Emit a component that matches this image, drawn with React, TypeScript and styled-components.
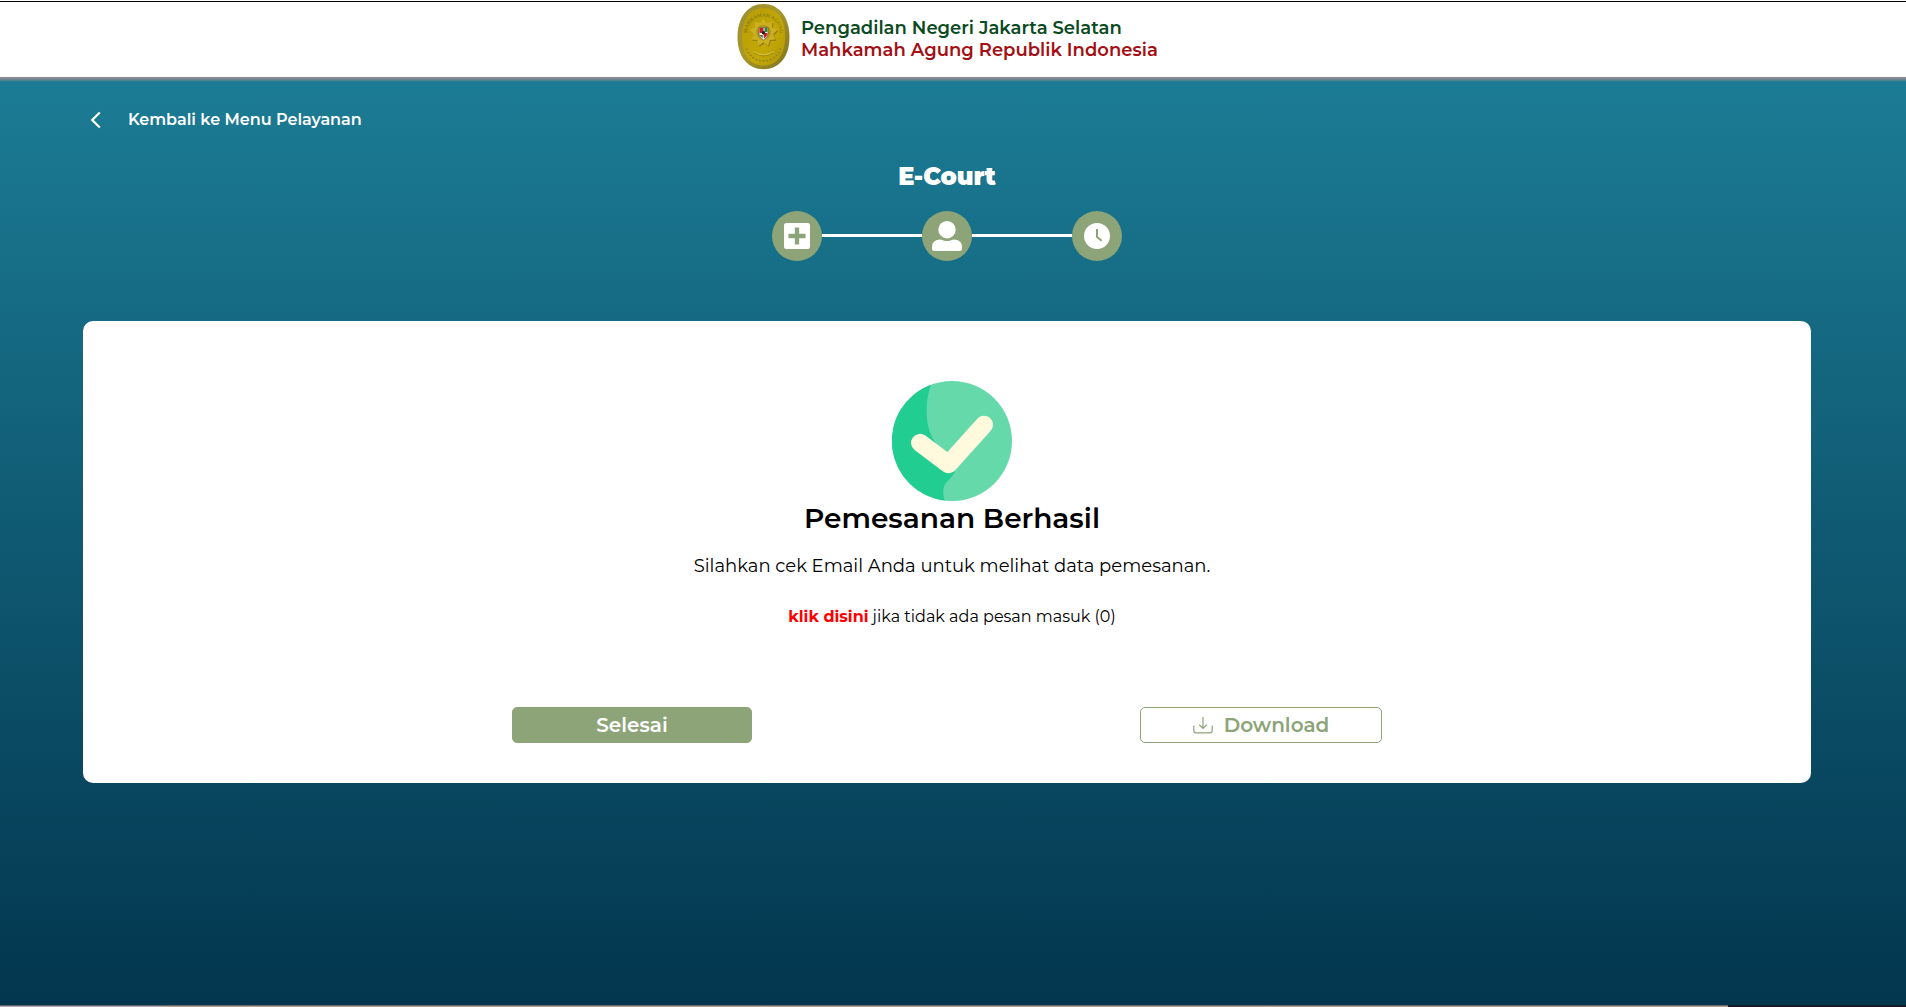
import React from "react";
import styled, { createGlobalStyle } from "styled-components";

const GlobalStyle = createGlobalStyle`
  *, *::before, *::after { box-sizing: border-box; }
  body { margin: 0; font-family: Montserrat, Inter, "Liberation Sans", sans-serif; }
`;

const Page = styled.div`
  display: flex;
  flex-direction: column;
  height: 1007px;
  overflow: hidden;
  background: #fff;
`;

const Header = styled.header`
  display: flex;
  flex: none;
  height: 76px;
  margin-top: 1px;
  padding: 2px 0 0 737px;
  border-top: 1px solid #000;
  gap: 11px;
`;

const Brand = styled.div`
  display: flex;
  flex-direction: column;
  padding-top: 13px;
`;

const Text = styled.span<{ $size: number; $line: number; $weight?: number; $color?: string }>`
  display: block;
  white-space: nowrap;
  font-size: ${(p) => p.$size}px;
  line-height: ${(p) => p.$line}px;
  font-weight: ${(p) => p.$weight ?? 400};
  color: ${(p) => p.$color ?? "#000"};
`;

const Main = styled.main`
  display: flex;
  flex-direction: column;
  flex: 1;
  padding: 0 95px 0 83px;
  background:
    linear-gradient(#8b8b92, #85888f 30%, rgba(133, 136, 143, 0)) top / 100% 5px no-repeat,
    linear-gradient(#1c7c95, #02364e);
`;

const Back = styled.a`
  display: flex;
  align-items: center;
  height: 24px;
  margin-top: 31px;
  padding-left: 7px;
  gap: 26px;
`;

const Title = styled.h1`
  display: flex;
  justify-content: center;
  margin: 29px 0 0;
  height: 32px;
`;

const Steps = styled.div`
  display: flex;
  align-items: center;
  justify-content: center;
  margin-top: 18px;
`;

const Step = styled.div`
  display: flex;
  align-items: center;
  justify-content: center;
  width: 50px;
  height: 50px;
  border-radius: 50%;
  background: #8ca478;
`;

const Line = styled.div`
  width: 100px;
  height: 3px;
  margin-bottom: 1px;
  background: #fff;
`;

const Card = styled.section`
  display: flex;
  flex-direction: column;
  height: 462px;
  margin-top: 60px;
  padding-top: 60px;
  border-radius: 10px;
  background: #fff;
`;

const Message = styled.div`
  display: flex;
  flex-direction: column;
  align-items: center;
  padding-left: 10px;
`;

const Spaced = styled.div<{ $top: number }>`
  display: flex;
  gap: 4px;
  margin-top: ${(p) => p.$top}px;
`;

const Actions = styled.div`
  display: flex;
  gap: 388px;
  padding-left: 429px;
  margin-top: 78px;
`;

const Button = styled.button<{ $outline?: boolean }>`
  display: flex;
  align-items: center;
  justify-content: center;
  width: ${(p) => (p.$outline ? 242 : 240)}px;
  height: 36px;
  padding: 0;
  gap: 11px;
  font-family: inherit;
  border: 1px solid #8ca478;
  border-radius: 5px;
  background: ${(p) => (p.$outline ? "#fff" : "#8ca478")};
`;

const Footer = styled.div`
  display: flex;
  flex: none;
  height: 2px;
`;

const Strip = styled.div<{ $w: number; $top: string; $bottom: string }>`
  width: ${(p) => p.$w}px;
  background: ${(p) => p.$bottom};
  border-top: 1px solid ${(p) => p.$top};
`;

const Graphic = styled.svg`
  display: block;
  flex: none;
  overflow: visible;
`;

function Emblem() {
  const sun = Array.from({ length: 18 }, (_, i) => {
    const r = i % 2 ? 9.8 : 14;
    const a = (i * Math.PI) / 9 - Math.PI / 2;
    return `${26.5 + r * Math.cos(a)},${28.5 + r * Math.sin(a)}`;
  }).join(" ");
  return (
    <Graphic width="53" height="66" viewBox="0 0 53 66">
      <defs>
        <linearGradient id="rim" x1="0" y1="0" x2="1" y2="1">
          <stop offset="0" stopColor="#9b8b32" />
          <stop offset=".45" stopColor="#a9972a" />
          <stop offset="1" stopColor="#7d721d" />
        </linearGradient>
        <linearGradient id="face" x1="0" y1="0" x2="1" y2="1">
          <stop offset="0" stopColor="#b49c08" />
          <stop offset=".6" stopColor="#c4a804" />
          <stop offset="1" stopColor="#ad9608" />
        </linearGradient>
        <path id="arc" d="M10.500 30C9 7 44 7 42.500 30" />
      </defs>
      <path d="M26.500 0C42 0 52.500 13 52.500 33S42 65.200 26.500 65.200 .5 53 .5 33 11 0 26.500 0Z" fill="url(#rim)" />
      <path d="M26.500 4C40 4 48 15 48 33S40 61.500 26.500 61.500 5 51 5 33 13 4 26.500 4Z" fill="url(#face)" />
      <text fontSize="5" fontWeight="700" fill="#8e7b18" textAnchor="middle" fontFamily="Liberation Serif, serif">
        <textPath href="#arc" startOffset="50%">MAHKAMAH AGUNG</textPath>
      </text>
      <polygon points={sun} transform="translate(.8 1)" fill="#8b7711" strokeLinejoin="round" />
      <polygon points={sun} fill="#ccb022" strokeLinejoin="round" />
      <circle cx="26.500" cy="28.500" r="7.500" fill="#b3981a" />
      <path d="M22 23.500H31V30Q30.500 34 26.500 36 22.500 34 22 30Z" fill="#f4f3e8" stroke="#51431d" strokeWidth=".6" />
      <path d="M22.500 24h4v5h-4zM26.500 29h4q0 3-3.500 5.500z" fill="#c91c2f" />
      <path d="M27.500 24h3v4h-3z" fill="#328541" />
      <path d="M22.700 31l3 3.500V31z" fill="#2e763d" />
      <circle cx="26.500" cy="28.700" r="1.700" fill="#20231b" />
      <path d="M16 47.500Q26.500 54 37 47.500" fill="none" stroke="#d6bd40" strokeWidth="1.100" />
      <path d="M16.500 48.700Q26.500 55.200 36.500 48.700" fill="none" stroke="#8e7b18" strokeWidth=".6" />
      <path d="M9.500 44Q14 56 26.500 56.500 39 56 43.500 44" fill="none" stroke="#9a8618" strokeWidth="2.400" strokeDasharray="2 1.600" />
      <path d="M9.500 43.500Q14 55 26.500 55.500 39 55 43.500 43.500" fill="none" stroke="#d0b732" strokeWidth="1" strokeDasharray="1.600 2" />
    </Graphic>
  );
}

function Success() {
  return (
    <Graphic width="120" height="120" viewBox="0 0 120 120">
      <circle cx="60" cy="60" r="60" fill="#66d9ab" />
      <path
        d="M39 3.700C34 17 31 43 43 61C49 71 66 84 62.500 91.500C59 98 52 102 51.500 108Q50.500 115 53 119.600A60 60 0 0 1 39 3.700Z"
        fill="#22cd91"
      />
      <path
        d="M28 61.800L56.500 83.200L92 43.800"
        fill="none"
        stroke="#fff9de"
        strokeWidth="18"
        strokeLinecap="round"
        strokeLinejoin="round"
      />
    </Graphic>
  );
}

export default function App() {
  return (
    <Page>
      <GlobalStyle />
      <Header>
        <Emblem />
        <Brand>
          <Text $size={18} $line={22} $weight={600} $color="#0b4a1f">Pengadilan Negeri Jakarta Selatan</Text>
          <Text $size={18} $line={22} $weight={600} $color="#a30f14">Mahkamah Agung Republik Indonesia</Text>
        </Brand>
      </Header>
      <Main>
        <Back>
          <Graphic width="12" height="18" viewBox="0 0 12 18" fill="none" stroke="#fff" strokeWidth="2.200">
            <path d="M9.800 1.500L2.200 9L9.800 16.500" />
          </Graphic>
          <Text $size={16} $line={24} $weight={600} $color="#fff">Kembali ke Menu Pelayanan</Text>
        </Back>
        <Title>
          <Text $size={24} $line={32} $weight={900} $color="#fff">E-Court</Text>
        </Title>
        <Steps>
          <Step>
            <Graphic width="26" height="26" viewBox="0 0 26 26">
              <rect width="26" height="26" rx="2.500" fill="#fff" />
              <path d="M13 4.500V21.500M4.500 13H21.500" stroke="#8ca478" strokeWidth="4.300" />
            </Graphic>
          </Step>
          <Line />
          <Step>
            <Graphic width="30" height="30" viewBox="0 0 30 30" fill="#fff">
              <circle cx="15" cy="8.700" r="8.700" />
              <path d="M7.500 18.500Q9.500 18.500 11.500 19.500Q15 20.600 18.500 19.500Q20.500 18.500 22.500 18.500Q30 19 30 26V27.500Q30 30 27.500 30H2.500Q0 30 0 27.500V26Q0 19 7.500 18.500Z" />
            </Graphic>
          </Step>
          <Line />
          <Step>
            <Graphic width="26" height="26" viewBox="0 0 26 26">
              <circle cx="13" cy="13" r="13" fill="#fff" />
              <path d="M13 6V14L17.700 17.700" fill="none" stroke="#8ca478" strokeWidth="2" />
            </Graphic>
          </Step>
        </Steps>
        <Card>
          <Message>
            <Success />
            <Text $size={28} $line={34} $weight={600}>Pemesanan Berhasil</Text>
            <Spaced $top={19}>
              <Text $size={18} $line={24}>Silahkan cek Email Anda untuk melihat data pemesanan.</Text>
            </Spaced>
            <Spaced $top={27}>
              <Text $size={16} $line={24} $weight={700} $color="#f00">klik disini</Text>
              <Text $size={16} $line={24}>jika tidak ada pesan masuk (0)</Text>
            </Spaced>
          </Message>
          <Actions>
            <Button>
              <Text $size={20} $line={24} $weight={600} $color="#fff">Selesai</Text>
            </Button>
            <Button $outline>
              <Graphic width="20" height="18" viewBox="0 0 20 18" fill="none" stroke="#8ca478" strokeWidth="1.200">
                <path d="M.8 9.500V14.500Q.8 16.800 3 16.800H17Q19.200 16.800 19.200 14.500V9.500M10 1V12M6.200 8.800L10 12.500L13.800 8.800" />
              </Graphic>
              <Text $size={20} $line={24} $weight={600} $color="#8ca478">Download</Text>
            </Button>
          </Actions>
        </Card>
      </Main>
      <Footer>
        <Strip $w={167} $top="#626a70" $bottom="#aaa" />
        <Strip $w={1561} $top="#6a6b68" $bottom="#aaa59c" />
        <Strip $w={178} $top="#121d2a" $bottom="#171c22" />
      </Footer>
    </Page>
  );
}
